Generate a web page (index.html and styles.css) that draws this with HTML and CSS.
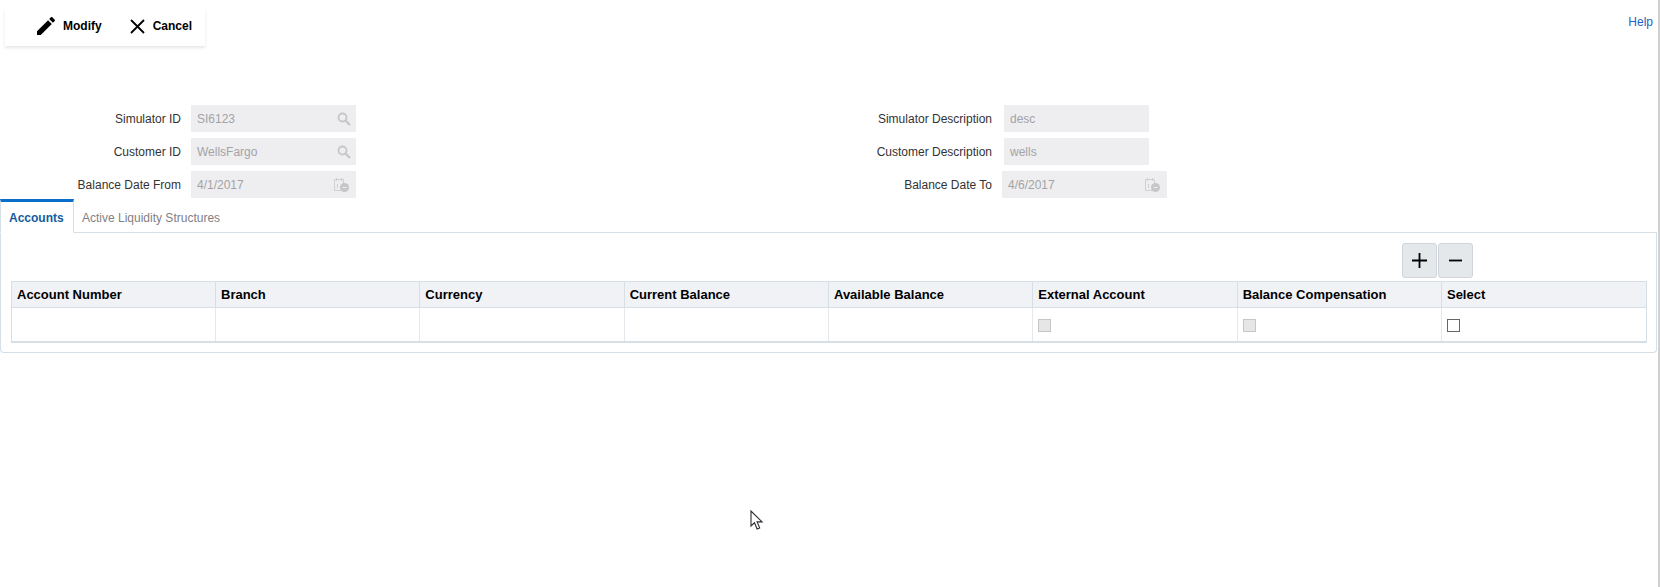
FILE: index.html
```html
<!DOCTYPE html>
<html lang="en">
<head>
  <meta charset="UTF-8">
  <meta name="viewport" content="width=device-width, initial-scale=1.0">
  <title>Simulator</title>
  <link rel="stylesheet" href="styles.css">
</head>
<body>
  <div class="top-bar">
    <div class="toolbar">
      <button class="tool-button tool-modify">
        <svg class="tool-icon" viewBox="3 3 18 18" width="18" height="18"><path d="M3 17.25V21h3.75L17.81 9.94l-3.75-3.75L3 17.25zM20.71 7.04c.39-.39.39-1.02 0-1.41l-2.34-2.34c-.39-.39-1.02-.39-1.41 0l-1.83 1.83 3.75 3.75 1.83-1.83z"/></svg>
        Modify
      </button>
      <button class="tool-button tool-cancel">
        <svg class="tool-icon" viewBox="0 0 15 15" width="15" height="15"><path d="M1 1l13 13M14 1L1 14" fill="none" stroke="#000" stroke-width="1.8"/></svg>
        Cancel
      </button>
    </div>
    <a class="help-link" href="#">Help</a>
  </div>

  <div class="form">
    <div class="form-col">
      <div class="form-row">
        <label class="form-label">Simulator ID</label>
        <div class="field">
          <span>SI6123</span>
          <svg class="field-icon" viewBox="0 0 14 14" width="14" height="14"><circle cx="5.5" cy="5.5" r="4" fill="none" stroke="#c6c6c8" stroke-width="1.8"/><path d="M8.5 8.5l4.5 4.5" stroke="#c6c6c8" stroke-width="2.2"/></svg>
        </div>
      </div>
      <div class="form-row">
        <label class="form-label">Customer ID</label>
        <div class="field">
          <span>WellsFargo</span>
          <svg class="field-icon" viewBox="0 0 14 14" width="14" height="14"><circle cx="5.5" cy="5.5" r="4" fill="none" stroke="#c6c6c8" stroke-width="1.8"/><path d="M8.5 8.5l4.5 4.5" stroke="#c6c6c8" stroke-width="2.2"/></svg>
        </div>
      </div>
      <div class="form-row">
        <label class="form-label">Balance Date From</label>
        <div class="field">
          <span>4/1/2017</span>
          <svg class="field-icon date-icon" viewBox="0 0 17 16" width="17" height="16"><path d="M1.5 2.5h9v11h-9z" fill="none" stroke="#cfcfd1"/><path d="M3.5 1v3M8.5 1v3M4.5 7v4" stroke="#cfcfd1"/><circle cx="11.5" cy="10.5" r="4.5" fill="#c6c6c8"/><path d="M9.5 10.5h4" stroke="#eeeef0"/></svg>
        </div>
      </div>
    </div>
    <div class="form-col">
      <div class="form-row">
        <label class="form-label">Simulator Description</label>
        <div class="field field-text"><span>desc</span></div>
      </div>
      <div class="form-row">
        <label class="form-label">Customer Description</label>
        <div class="field field-text"><span>wells</span></div>
      </div>
      <div class="form-row">
        <label class="form-label">Balance Date To</label>
        <div class="field">
          <span>4/6/2017</span>
          <svg class="field-icon date-icon" viewBox="0 0 17 16" width="17" height="16"><path d="M1.5 2.5h9v11h-9z" fill="none" stroke="#cfcfd1"/><path d="M3.5 1v3M8.5 1v3M4.5 7v4" stroke="#cfcfd1"/><circle cx="11.5" cy="10.5" r="4.5" fill="#c6c6c8"/><path d="M9.5 10.5h4" stroke="#eeeef0"/></svg>
        </div>
      </div>
    </div>
  </div>

  <div class="tabs">
    <div class="tab tab-active">Accounts</div>
    <div class="tab">Active Liquidity Structures</div>
  </div>

  <div class="panel">
    <div class="table-actions">
      <button class="square-button">
        <svg viewBox="0 0 15 15" width="15" height="15"><path d="M7.5 0v15M0 7.5h15" stroke="#000" stroke-width="1.8"/></svg>
      </button>
      <button class="square-button">
        <svg viewBox="0 0 15 15" width="15" height="15"><path d="M1 7.5h13" stroke="#000" stroke-width="1.8"/></svg>
      </button>
    </div>
    <div class="grid-table">
      <div class="cell head">Account Number</div>
      <div class="cell head">Branch</div>
      <div class="cell head">Currency</div>
      <div class="cell head">Current Balance</div>
      <div class="cell head">Available Balance</div>
      <div class="cell head">External Account</div>
      <div class="cell head">Balance Compensation</div>
      <div class="cell head">Select</div>
      <div class="cell"></div>
      <div class="cell"></div>
      <div class="cell"></div>
      <div class="cell"></div>
      <div class="cell"></div>
      <div class="cell"><span class="check check-off"></span></div>
      <div class="cell"><span class="check check-off"></span></div>
      <div class="cell"><span class="check"></span></div>
    </div>
  </div>

  <svg class="cursor" viewBox="0 0 14 21" width="14" height="21"><path d="M1 1v15l3.5-3.2 2.6 6.2 2.6-1.1-2.6-6h5z" fill="#fff" stroke="#2b2b33" stroke-width="1.1"/></svg>
</body>
</html>
```

FILE: styles.css
```css
body {
  font-family: "Liberation Sans", Arial, sans-serif;
  font-size: 12px;
  color: #333;
  margin: 0;
  height: 587px;
  box-sizing: border-box;
  border-right: 2px solid #d0d0d0;
  background-color: #fff;
  overflow: hidden;
}
.top-bar {
  display: flex;
  justify-content: space-between;
  height: 105px;
}
.toolbar {
  display: flex;
  align-items: center;
  box-sizing: border-box;
  width: 200px;
  height: 38px;
  margin: 8px 0 0 5px;
  padding-bottom: 2px;
  box-shadow: 0 2px 3px rgba(0, 0, 0, 0.1);
}
.tool-button {
  display: flex;
  align-items: center;
  padding: 0;
  border: none;
  background: none;
  font: bold 12px "Liberation Sans", Arial, sans-serif;
  color: #000;
}
.tool-modify {
  margin-left: 32px;
  gap: 8px;
}
.tool-cancel {
  margin-left: 28px;
  gap: 8px;
}
.help-link {
  margin: 15px 0 0;
  padding-right: 5px;
  color: #1f5fbf;
  text-decoration: none;
  height: 14px;
}
.form {
  display: grid;
  grid-template-columns: 811px 1fr;
}
.form-row {
  display: flex;
  align-items: center;
  margin-bottom: 6px;
}
.form-label {
  width: 181px;
  text-align: right;
  margin-right: 10px;
}
.field {
  display: flex;
  align-items: center;
  justify-content: space-between;
  box-sizing: border-box;
  width: 165px;
  height: 27px;
  padding: 0 5px 0 6px;
  background-color: #eeeef0;
  color: #a3a3a6;
}
.field-text {
  width: 145px;
  margin-left: 2px;
}
.date-icon {
  margin-right: 1px;
}
.tabs {
  display: flex;
  width: 1657px;
  height: 33px;
  margin-top: -5px;
  border-bottom: 1px solid #d6dfe6;
}
.tab {
  padding: 12px 9px 0 8px;
  color: #7f7f85;
}
.tab-active {
  width: 55px;
  height: 21px;
  padding-top: 9px;
  border-top: 3px solid #0a6ecb;
  border-left: 1px solid #d6dfe6;
  border-right: 1px solid #d6dfe6;
  border-bottom: 1px solid #fff;
  font-weight: bold;
  color: #145c9e;
}
.panel {
  box-sizing: border-box;
  width: 1657px;
  height: 120px;
  padding: 10px 10px 0 10px;
  border: 1px solid #d6dfe6;
  border-top: none;
  border-radius: 0 0 4px 4px;
}
.table-actions {
  display: flex;
  justify-content: flex-end;
  gap: 1px;
  height: 35px;
  margin-right: 173px;
  margin-bottom: 3px;
}
.square-button {
  display: flex;
  align-items: center;
  justify-content: center;
  width: 35px;
  height: 35px;
  padding: 0;
  border: 1px solid #cfd5da;
  border-radius: 3px;
  background-color: #e4e8eb;
}
.grid-table {
  display: grid;
  grid-template-columns: 203px repeat(6, 204.33px) 1fr;
  grid-template-rows: 26px 33px;
  width: 1636px;
  border: 1px solid #d6dfe6;
  border-bottom-width: 2px;
  box-sizing: border-box;
  color: #000;
}
.cell {
  display: flex;
  align-items: center;
  padding-left: 5px;
  border-left: 1px solid #e4e8ec;
  min-width: 0;
}
.cell:nth-child(8n+1) {
  border-left: none;
}
.head {
  font-size: 13px;
  font-weight: bold;
  padding-bottom: 1px;
  background-color: #f0f2f6;
  border-bottom: 1px solid #d6dfe6;
  border-left-color: #d6dfe6;
}
.check {
  display: block;
  box-sizing: border-box;
  width: 13px;
  height: 13px;
  margin-top: 2px;
  border: 1px solid #666;
  background-color: #fff;
}
.check-off {
  border-color: #c6c6c6;
  background-color: #e6e6e6;
}
.cursor {
  position: absolute;
  left: 750px;
  top: 510px;
}
```
